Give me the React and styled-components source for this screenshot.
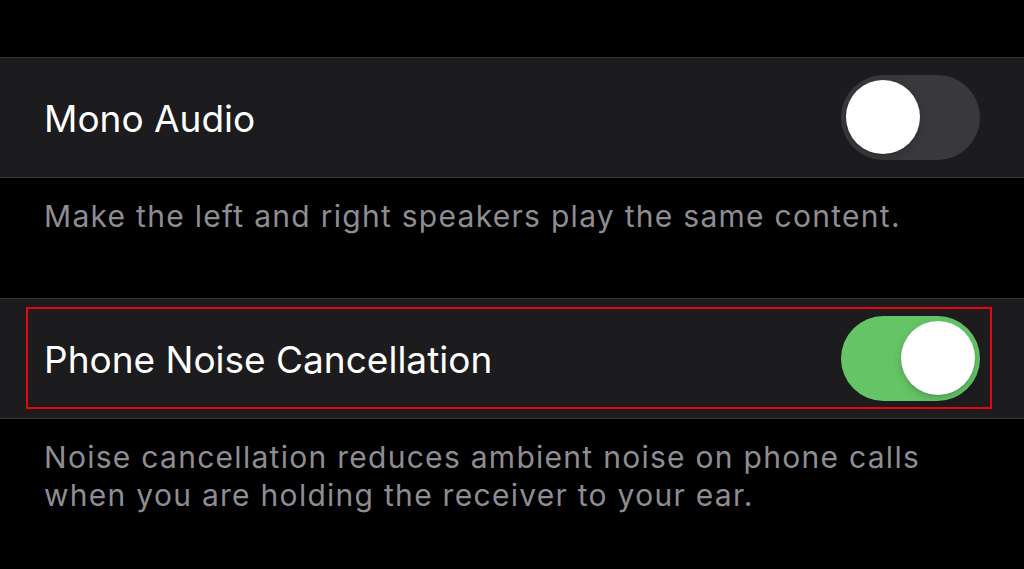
import React, { useState } from "react";
import styled, { createGlobalStyle } from "styled-components";

const GlobalStyle = createGlobalStyle`
  html, body {
    margin: 0;
    padding: 0;
    background: #000;
  }
  body {
    font-family: Inter, "Open Sans", "Liberation Sans", sans-serif;
    -webkit-font-smoothing: antialiased;
  }
`;

const Page = styled.div`
  width: 1024px;
  height: 569px;
  overflow: hidden;
  background: #000;
  padding-top: 57px;
  box-sizing: border-box;
`;

const Group = styled.section`
  display: flex;
  flex-direction: column;
  margin-bottom: ${(p) => p.$gap || 0}px;
`;

const Cell = styled.div`
  height: 119px;
  background: #1c1c1e;
  border-top: 1px solid #38383a;
  border-bottom: 1px solid #38383a;
  display: flex;
  align-items: center;
  justify-content: space-between;
  padding: 0 44px 0 44px;
  position: relative;
`;

const Highlight = styled.div`
  position: absolute;
  left: 26px;
  right: 32px;
  top: 8px;
  bottom: 9px;
  border: 2px solid #e8060c;
  pointer-events: none;
`;

const Label = styled.span`
  color: #fff;
  font-size: 37px;
  letter-spacing: 0;
  padding-top: 2px;
`;

const Footer = styled.p`
  margin: 0;
  padding: 19px 44px 0;
  color: #8d8d93;
  font-size: 30px;
  line-height: 38px;
  letter-spacing: 1.28px;
`;

const Track = styled.button`
  width: 139px;
  height: 85px;
  border-radius: 43px;
  border: none;
  padding: 0;
  background: ${(p) => (p.$on ? "#65c466" : "#39393d")};
  position: relative;
  cursor: pointer;
  flex-shrink: 0;
`;

const Knob = styled.span`
  position: absolute;
  top: 5px;
  left: ${(p) => (p.$on ? "60px" : "5px")};
  width: 74px;
  height: 74px;
  border-radius: 50%;
  background: #fff;
  box-shadow: 0 3px 8px rgba(0, 0, 0, 0.18), 0 1px 1px rgba(0, 0, 0, 0.12);
`;

function Toggle({ on, onChange }) {
  return (
    <Track $on={on} onClick={() => onChange(!on)} aria-pressed={on}>
      <Knob $on={on} />
    </Track>
  );
}

export default function App() {
  const [mono, setMono] = useState(false);
  const [noise, setNoise] = useState(true);

  return (
    <Page>
      <GlobalStyle />
      <Group $gap={63}>
        <Cell>
          <Label>Mono Audio</Label>
          <Toggle on={mono} onChange={setMono} />
        </Cell>
        <Footer>Make the left and right speakers play the same content.</Footer>
      </Group>
      <Group>
        <Cell>
          <Highlight />
          <Label>Phone Noise Cancellation</Label>
          <Toggle on={noise} onChange={setNoise} />
        </Cell>
        <Footer>
          Noise cancellation reduces ambient noise on phone calls
          <br />
          when you are holding the receiver to your ear.
        </Footer>
      </Group>
    </Page>
  );
}
